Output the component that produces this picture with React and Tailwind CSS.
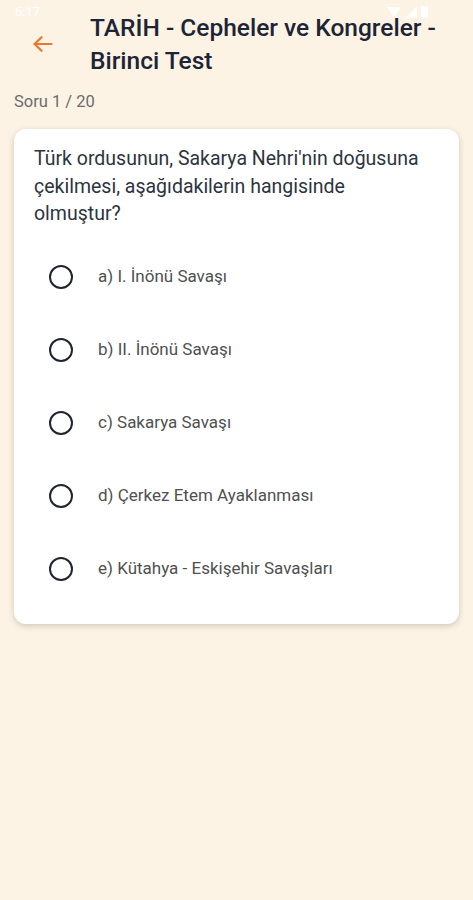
const options = [
    'a) I. İnönü Savaşı',
    'b) II. İnönü Savaşı',
    'c) Sakarya Savaşı',
    'd) Çerkez Etem Ayaklanması',
    'e) Kütahya - Eskişehir Savaşları',
];

function StatusBar() {
    return (
        <div className="h-[24px] px-[15px] flex items-center justify-between text-white text-[13px]">
            <span>6:17</span>
            <div className="flex items-center gap-[4px] pr-[30px]">
                <svg width="14" height="12" viewBox="0 0 14 12" fill="white">
                    <path d="M0 1 L14 1 L7 11 Z" />
                </svg>
                <svg width="12" height="12" viewBox="0 0 12 12" fill="white">
                    <path d="M12 0 L12 12 L0 12 Z" />
                </svg>
                <div className="w-[7px] h-[12px] bg-white rounded-[1px]"></div>
            </div>
        </div>
    );
}

function BackArrow() {
    return (
        <svg width="20" height="16" viewBox="0 0 20 16" fill="none" stroke="#e8782f" strokeWidth="2.2" strokeLinecap="round" strokeLinejoin="round">
            <path d="M8.5 1.2 L1.6 8 L8.5 14.8" />
            <path d="M1.6 8 H18.5" />
        </svg>
    );
}

function App() {
    return (
        <div
            className="w-[473px] h-[900px] bg-[#fdf3e4] overflow-hidden"
            style={{ fontFamily: 'Roboto, "Noto Sans", sans-serif' }}
        >
            <StatusBar />

            {/* Header */}
            <div className="flex items-center -mt-[13px]">
                <button className="w-[90px] shrink-0 pl-[33px] flex items-center">
                    <BackArrow />
                </button>
                <h1 className="text-[24.5px] leading-[33px] font-medium text-[#1c2436] pr-[20px]">
                    TARİH - Cepheler ve Kongreler - Birinci Test
                </h1>
            </div>

            <p className="px-[14px] mt-[13px] text-[16.5px] leading-[24px] text-[#6b6b6b]">Soru 1 / 20</p>

            {/* Question card */}
            <div className="mx-[14px] mt-[15px] bg-white rounded-[12px] shadow-[0_2px_6px_rgba(0,0,0,0.18)] pt-[16px] pl-[20px] pr-[32px] pb-[18px]">
                <p className="text-[19.5px] leading-[27.5px] text-[#2d3440]">
                    Türk ordusunun, Sakarya Nehri'nin doğusuna çekilmesi, aşağıdakilerin hangisinde olmuştur?
                </p>
                <div className="mt-[13px]">
                    {options.map((opt) => (
                        <div key={opt} className="h-[73px] flex items-center pl-[15px]">
                            <div className="w-[24px] h-[24px] shrink-0 rounded-full border-[2.5px] border-[#1f2430]"></div>
                            <span className="ml-[25px] text-[17px] text-[#505050]">{opt}</span>
                        </div>
                    ))}
                </div>
            </div>
        </div>
    );
}

export default App;
